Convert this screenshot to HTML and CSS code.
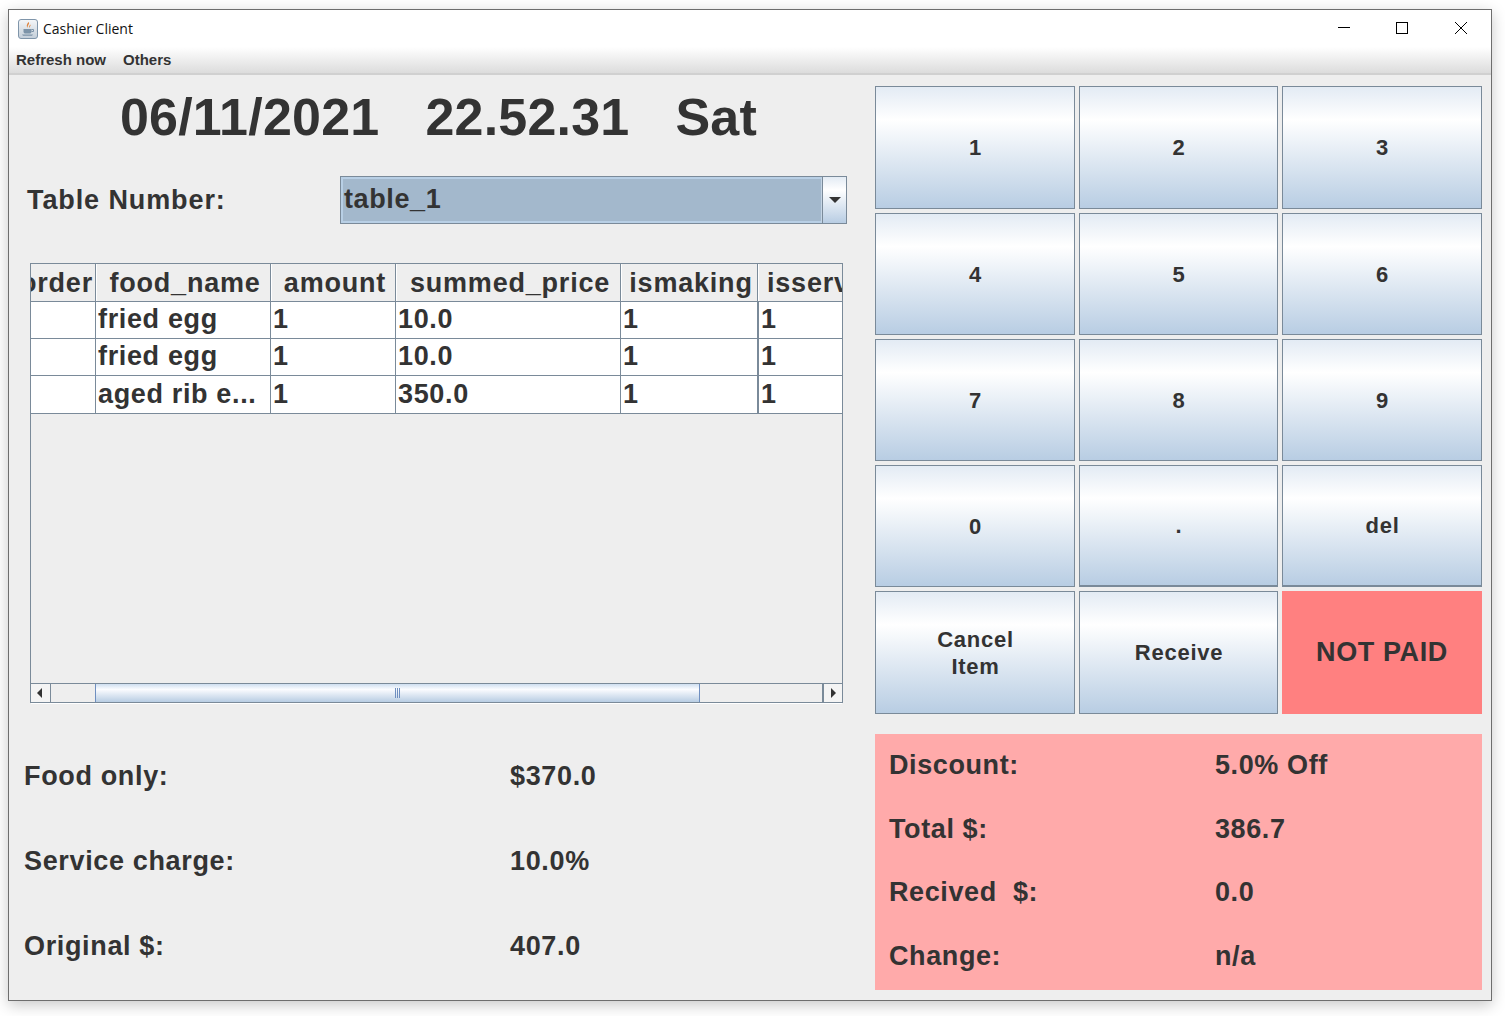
FILE: index.html
```html
<!DOCTYPE html>
<html lang="en">
<head>
<meta charset="utf-8">
<title>Cashier Client</title>
<link rel="stylesheet" href="styles.css">
</head>
<body>

<div class="window">

    <div class="titlebar">
        <svg class="app-icon" width="20" height="20" viewBox="0 0 20 20">
            <defs>
                <linearGradient id="icon-bg" x1="0" y1="0" x2="0" y2="1">
                    <stop offset="0" stop-color="#f4f6f8"/>
                    <stop offset="1" stop-color="#c3ced9"/>
                </linearGradient>
            </defs>
            <rect x="0.5" y="0.5" width="19" height="19" rx="2.5" fill="url(#icon-bg)" stroke="#7f95aa"/>
            <path d="M10.5 3 C12.5 5 8.5 6.5 10 9 C8 7.5 8.5 5.5 10.5 3 Z M12.5 5.5 C13 7 11.5 7.5 11.5 9 C10.5 7.5 11.5 6.5 12.5 5.5 Z" fill="#e0823a"/>
            <path d="M5.5 10 H13.5 V12.5 C13.5 14 12.5 14.5 11.5 14.5 H7.5 C6.5 14.5 5.5 14 5.5 12.5 Z" fill="#7c93a8"/>
            <path d="M13.5 10.5 H15.5 V12.5 H13.5" fill="none" stroke="#7c93a8"/>
            <path d="M4 15.5 H15 L14 16.8 H5 Z" fill="#7c93a8"/>
        </svg>
        <span class="app-title">Cashier Client</span>
        <div class="win-controls">
            <svg width="58" height="36" viewBox="0 0 58 36"><path d="M21 17.5 H33" stroke="#000" stroke-width="1"/></svg>
            <svg width="58" height="36" viewBox="0 0 58 36"><rect x="21.5" y="12.5" width="11" height="11" fill="none" stroke="#000"/></svg>
            <svg width="58" height="36" viewBox="0 0 58 36"><path d="M22 12 L34 24 M34 12 L22 24" stroke="#000" stroke-width="1"/></svg>
        </div>
    </div>

    <div class="menubar">
        <span>Refresh now</span>
        <span>Others</span>
    </div>

    <div class="main">

        <div class="left-side">
            <div class="clock">06/11/2021&nbsp;&nbsp; 22.52.31&nbsp;&nbsp; Sat</div>

            <div class="table-select">
                <span class="select-label">Table Number:</span>
                <div class="combo">
                    <div class="combo-value"><span>table_1</span></div>
                    <div class="combo-arrow"><i></i></div>
                </div>
            </div>

            <div class="scrollpane">
                <div class="grid head">
                    <div class="hcell first"><span>order</span></div>
                    <div class="hcell">food_name</div>
                    <div class="hcell">amount</div>
                    <div class="hcell">summed_price</div>
                    <div class="hcell">ismaking</div>
                    <div class="hcell last"><span>isserved</span></div>
                </div>
                <div class="grid row">
                    <div class="cell"></div>
                    <div class="cell">fried egg</div>
                    <div class="cell">1</div>
                    <div class="cell">10.0</div>
                    <div class="cell">1</div>
                    <div class="cell last">1</div>
                </div>
                <div class="grid row">
                    <div class="cell"></div>
                    <div class="cell">fried egg</div>
                    <div class="cell">1</div>
                    <div class="cell">10.0</div>
                    <div class="cell">1</div>
                    <div class="cell last">1</div>
                </div>
                <div class="grid row tall">
                    <div class="cell"></div>
                    <div class="cell">aged rib e...</div>
                    <div class="cell">1</div>
                    <div class="cell">350.0</div>
                    <div class="cell">1</div>
                    <div class="cell last">1</div>
                </div>
                <div class="pane-empty"></div>
                <div class="hscroll">
                    <div class="sb-btn start"><i class="arrow-left"></i></div>
                    <div class="sb-track before"></div>
                    <div class="sb-thumb"><i></i><i></i><i></i></div>
                    <div class="sb-track after"></div>
                    <div class="sb-btn end"><i class="arrow-right"></i></div>
                </div>
            </div>

            <div class="summary">
                <span>Food only:</span><span>$370.0</span>
                <span>Service charge:</span><span>10.0%</span>
                <span>Original $:</span><span>407.0</span>
            </div>
        </div>

        <div class="right-side">
            <div class="keypad">
                <button>1</button>
                <button>2</button>
                <button>3</button>
                <button>4</button>
                <button>5</button>
                <button>6</button>
                <button>7</button>
                <button>8</button>
                <button>9</button>
                <button>0</button>
                <button class="thick">.</button>
                <button class="thick">del</button>
                <button>Cancel<br>Item</button>
                <button>Receive</button>
                <div class="not-paid">NOT PAID</div>
            </div>

            <div class="totals">
                <span>Discount:</span><span>5.0% Off</span>
                <span>Total $:</span><span>386.7</span>
                <span>Recived&nbsp; $:</span><span>0.0</span>
                <span>Change:</span><span>n/a</span>
            </div>
        </div>

    </div>
</div>

</body>
</html>
```

FILE: styles.css
```css
html, body {
    margin: 0;
    padding: 0;
    background: #fff;
}
body {
    width: 1505px;
    height: 1016px;
    padding: 9px 0 0 8px;
    box-sizing: border-box;
    overflow: hidden;
    font-family: "Liberation Sans", Arial, sans-serif;
    font-weight: bold;
    color: #333;
}

.window {
    width: 1484px;
    height: 992px;
    box-sizing: border-box;
    border: 1px solid #6e6e6e;
    background: #eee;
    box-shadow: 0 4px 14px rgba(0, 0, 0, 0.22);
    display: flex;
    flex-direction: column;
}

/* title + menu */
.titlebar {
    height: 37px;
    background: #fff;
    display: flex;
    align-items: center;
    flex: none;
}
.app-icon {
    margin-left: 9px;
    flex: none;
}
.app-title {
    margin-left: 5px;
    font: normal 14px "Open Sans", sans-serif;
    color: #111;
}
.win-controls {
    margin-left: auto;
    display: flex;
    margin-top: -1px;
}

.menubar {
    height: 28px;
    box-sizing: border-box;
    flex: none;
    display: flex;
    gap: 17px;
    padding: 4px 0 0 7px;
    font-size: 15px;
    line-height: 17px;
    background: linear-gradient(#fff, #dcdcdc);
    border-bottom: 2px solid #d0d0d0;
}

.main {
    flex: 1;
    display: flex;
    min-height: 0;
}

/* left side */
.left-side {
    width: 866px;
    flex: none;
}
.clock {
    height: 89px;
    padding: 11px 7px 0 0;
    box-sizing: border-box;
    font-size: 52px;
    line-height: 62px;
    text-align: center;
    letter-spacing: 0.2px;
    word-spacing: 0.7px;
}

.table-select {
    display: flex;
    align-items: center;
    height: 48px;
    margin-top: 12px;
    padding-left: 18px;
    font-size: 27px;
    letter-spacing: 0.9px;
}
.select-label {
    width: 313px;
    flex: none;
}
.combo {
    width: 507px;
    height: 48px;
    box-sizing: border-box;
    border: 1px solid #7a8a99;
    display: flex;
    flex: none;
}
.combo-value {
    flex: 1;
    background: #a3b8cc;
    border: 2px solid #b8cfe5;
    border-right: 1px solid #c5d5e5;
    display: flex;
    align-items: center;
    padding-left: 1px;
    padding-bottom: 2px;
    line-height: 38px;
    letter-spacing: 0.6px;
}
.combo-arrow {
    width: 23px;
    flex: none;
    border-left: 1px solid #7a8a99;
    background: linear-gradient(#e3ebf4, #fff 28%, #b8cde3);
    display: flex;
    align-items: center;
    justify-content: center;
}
.combo-arrow i {
    width: 0;
    height: 0;
    border-left: 6px solid transparent;
    border-right: 6px solid transparent;
    border-top: 6px solid #333;
}

/* table */
.scrollpane {
    width: 813px;
    height: 440px;
    margin: 39px 0 0 21px;
    box-sizing: border-box;
    border: 1px solid #7a8a99;
    border-bottom: 0;
    display: flex;
    flex-direction: column;
    font-size: 27px;
}
.grid {
    display: grid;
    grid-template-columns: 65px 175px 125px 225px 137px 1fr;
    flex: none;
}
.head {
    height: 38px;
    background: #eee;
    border-bottom: 1px solid #7a8a99;
    box-sizing: border-box;
}
.hcell {
    box-sizing: border-box;
    border-right: 1px solid #7a8a99;
    border-left: 1px solid #fff;
    padding-left: 3px;
    text-align: center;
    line-height: 39px;
    white-space: nowrap;
    overflow: hidden;
    letter-spacing: 0.8px;
}
.hcell.first {
    display: flex;
    justify-content: flex-end;
    padding: 0 2px 0 0;
    border-left: 0;
}
.hcell.last {
    border-right: 0;
    text-align: left;
    padding-left: 8px;
}
.row {
    height: 37px;
    background: #fff;
    border-bottom: 1px solid #7a8a99;
    box-sizing: border-box;
}
.row.tall {
    height: 38px;
}
.cell {
    box-sizing: border-box;
    border-right: 1px solid #7a8a99;
    padding-left: 2px;
    line-height: 35px;
    white-space: nowrap;
    overflow: hidden;
    letter-spacing: 0.65px;
}
.row.tall .cell {
    line-height: 37px;
}
.cell.last {
    border-right: 0;
    border-left: 1px solid #7a8a99;
}
.pane-empty {
    flex: 1;
}
.hscroll {
    height: 20px;
    flex: none;
    display: flex;
    box-sizing: border-box;
    border-top: 1px solid #7a8a99;
    border-bottom: 1px solid #7a8a99;
    box-shadow: 0 1px 0 #fff;
}
.sb-btn {
    width: 20px;
    flex: none;
    box-sizing: border-box;
    background: #f4f4f4;
    border-right: 1px solid #7a8a99;
    display: flex;
    align-items: center;
    justify-content: center;
}
.sb-btn.start {
    padding-right: 2px;
}
.sb-btn.end {
    border-right: 0;
    border-left: 2px solid #7a8a99;
}
.arrow-left {
    border-top: 5.5px solid transparent;
    border-bottom: 5.5px solid transparent;
    border-right: 5px solid #333;
}
.arrow-right {
    border-top: 5.5px solid transparent;
    border-bottom: 5.5px solid transparent;
    border-left: 5px solid #333;
}
.sb-track.before {
    width: 44px;
    flex: none;
}
.sb-track.after {
    flex: 1;
}
.sb-thumb {
    width: 605px;
    flex: none;
    box-sizing: border-box;
    border-left: 1px solid #6f8fc0;
    border-right: 1px solid #6f8fc0;
    background: linear-gradient(#cfdff0, #fbfcff 30%, #b8cde3);
    display: flex;
    align-items: center;
    justify-content: center;
    gap: 1px;
}
.sb-thumb i {
    width: 1px;
    height: 10px;
    background: #6f8fc0;
}

.summary {
    display: grid;
    grid-template-columns: 486px 1fr;
    grid-auto-rows: 85px;
    align-items: center;
    margin-top: 31px;
    padding-left: 15px;
    font-size: 27px;
    letter-spacing: 0.65px;
}

/* right side */
.right-side {
    width: 607px;
    flex: none;
    padding-top: 11px;
}
.keypad {
    display: grid;
    grid-template-columns: 200px 199px 200px;
    grid-template-rows: 123px 122px 122px 122px 123px;
    column-gap: 4px;
    row-gap: 4px;
}
.keypad button {
    margin: 0;
    padding: 0 0 0 1px;
    border: 1px solid #7a8a99;
    background: linear-gradient(#e3ebf4, #fff 27%, #b8cde3);
    color: #333;
    font: bold 22px/27px "Liberation Sans", Arial, sans-serif;
    letter-spacing: 0.75px;
}
.keypad button.thick {
    border-bottom-width: 2px;
}
.not-paid {
    background: #ff8080;
    font-size: 27px;
    letter-spacing: 0.6px;
    display: flex;
    align-items: center;
    justify-content: center;
}

.totals {
    margin-top: 20px;
    height: 256px;
    box-sizing: border-box;
    padding: 0 0 2px 14px;
    background: #ffaaaa;
    display: grid;
    grid-template-columns: 326px 1fr;
    grid-template-rows: repeat(4, 63.5px);
    align-items: center;
    font-size: 27px;
    letter-spacing: 0.6px;
}
```
